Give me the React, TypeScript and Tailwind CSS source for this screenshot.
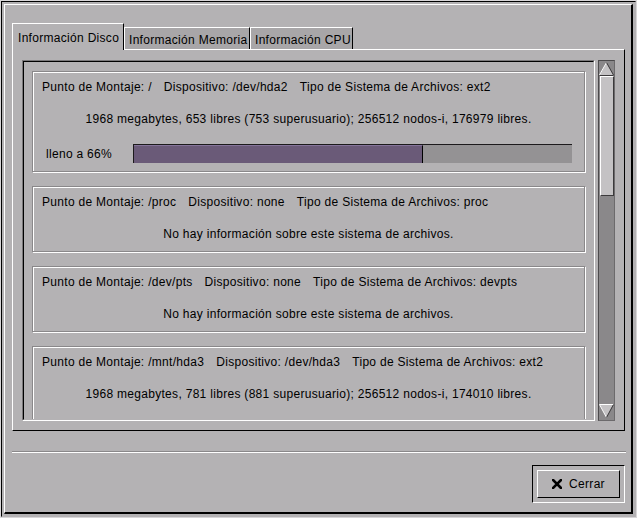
const fs = [
  {
    mount: "/",
    device: "/dev/hda2",
    type: "ext2",
    info: "1968 megabytes, 653 libres (753 superusuario); 256512 nodos-i, 176979 libres.",
    used: 66,
  },
  { mount: "/proc", device: "none", type: "proc", info: null, used: null },
  { mount: "/dev/pts", device: "none", type: "devpts", info: null, used: null },
  {
    // the bar row of this one lies below the scrolled view
    mount: "/mnt/hda3",
    device: "/dev/hda3",
    type: "ext2",
    info: "1968 megabytes, 781 libres (881 superusuario); 256512 nodos-i, 174010 libres.",
    used: null,
  },
];

const UpArrow = () => (
  <svg width="15" height="14" viewBox="0 0 15 14" className="block">
    <polygon points="7.5,1 1,13 14,13" fill="#c4c2c4" />
    <line x1="7.5" y1="0.5" x2="0.5" y2="13" stroke="#ffffff" strokeWidth="1" />
    <line x1="7.5" y1="0.5" x2="14.5" y2="13" stroke="#3c3a3c" strokeWidth="1" />
    <line x1="0.5" y1="13.5" x2="14.5" y2="13.5" stroke="#3c3a3c" strokeWidth="1" />
  </svg>
);

const DownArrow = () => (
  <svg width="15" height="14" viewBox="0 0 15 14" className="block">
    <polygon points="1,1 14,1 7.5,13" fill="#c4c2c4" />
    <line x1="0.5" y1="0.5" x2="14.5" y2="0.5" stroke="#ffffff" strokeWidth="1" />
    <line x1="0.5" y1="0.5" x2="7.5" y2="13.5" stroke="#ffffff" strokeWidth="1" />
    <line x1="14.5" y1="0.5" x2="7.5" y2="13.5" stroke="#3c3a3c" strokeWidth="1" />
  </svg>
);

const CloseIcon = () => (
  <svg width="10" height="10" viewBox="0 0 10 10" className="block">
    <path d="M1 1 L9 9 M9 1 L1 9" stroke="#000" strokeWidth="2.6" strokeLinecap="square" />
  </svg>
);

const App = () => {
  return (
    <div className="w-[637px] h-[518px] bg-[#b4b2b4] border border-[#d8d6d8] font-['Liberation_Sans',Arial,sans-serif] text-[12px] leading-[14px] tracking-[0.3px] text-black">
      <div className="h-full border border-black border-b-[#b4b2b4] border-r-[#b4b2b4] p-[2px]">
        <div className="h-full border-t border-l border-white border-b-2 border-r-2 border-b-black border-r-black pl-[7px] pt-[18px]">
          {/* tabs */}
          <div className="flex items-end h-[26px]">
            <div className="relative z-10 -mb-px h-[27px] w-[112px] bg-[#b4b2b4] border-t border-l border-white border-r border-r-black pt-[7px] pl-[5px] whitespace-nowrap">
              Información Disco
            </div>
            <div className="h-[22px] w-[126px] bg-[#a8a6a8] border-t border-l border-white border-r border-r-black pt-[5px] pl-[4px] whitespace-nowrap">
              Información Memoria
            </div>
            <div className="h-[22px] w-[103px] bg-[#a8a6a8] border-t border-l border-white border-r border-r-black pt-[5px] pl-[4px] whitespace-nowrap">
              Información CPU
            </div>
          </div>

          {/* notebook page */}
          <div className="w-[613px] h-[382px] border border-white border-r-black border-b-black pt-[10px] pl-[9px]">
            <div className="flex gap-[3px]">
              <div className="w-[573px] h-[361px] border border-[#7a787a] border-b-white border-r-white">
                <div className="h-full overflow-hidden border border-black border-b-[#b4b2b4] border-r-[#b4b2b4] pt-[9px] pl-[8px] pr-[8px]">
                  <div className="flex flex-col gap-[14px]">
                    {fs.map((f, i) => (
                      <div
                        key={f.mount}
                        className={`border border-[#8a888a] shadow-[inset_1px_1px_0_#fff,1px_1px_0_#fff] pt-[8px] pb-[10px] shrink-0 ${
                          i === 3 ? "min-h-[101px]" : ""
                        }`}
                      >
                        <div className="flex gap-[12px] pl-[9px] whitespace-nowrap">
                          <span>Punto de Montaje: {f.mount}</span>
                          <span>Dispositivo: {f.device}</span>
                          <span>Tipo de Sistema de Archivos: {f.type}</span>
                        </div>
                        <div className="mt-[18px] text-center whitespace-nowrap">
                          {f.info ?? "No hay información sobre este sistema de archivos."}
                        </div>
                        {f.used !== null && (
                          <div className="mt-[18px] -mb-[2px] flex items-center h-[19px] pl-[13px] pr-[12px]">
                            <span className="w-[87px] shrink-0">lleno a {f.used}%</span>
                            <div className="flex-1 h-[19px] bg-[#949294] border-t border-l border-[#1c1a1c] flex">
                              <div
                                className="h-full bg-[#6a5a78] border-t border-t-[#84749a] border-r border-r-black"
                                style={{ width: `${f.used}%` }}
                              />
                            </div>
                          </div>
                        )}
                      </div>
                    ))}
                  </div>
                </div>
              </div>

              {/* scrollbar */}
              <div className="w-[17px] h-[361px] bg-[#8a888a] border border-[#4c4a4c] border-b-[#6c6a6c] border-r-[#6c6a6c] flex flex-col items-center pt-px pb-[2px]">
                <UpArrow />
                <div className="w-[14px] h-[120px] bg-[#c4c2c4] border-t border-l border-white border-b border-r border-b-[#3c3a3c] border-r-[#3c3a3c]" />
                <div className="flex-1" />
                <DownArrow />
              </div>
            </div>
          </div>

          {/* separator */}
          <div className="w-[614px] mt-[20px] border-t border-[#8a888a] border-b border-b-white" />

          {/* buttons */}
          <div className="w-[614px] mt-[12px] flex justify-end pr-[1px]">
            <div className="w-[93px] h-[38px] border border-black border-b-white border-r-white p-[4px]">
              <div className="h-[28px] w-[83px] bg-[#b4b2b4] border-t border-l border-white border-b border-r border-b-black border-r-black flex items-center justify-center gap-[7px]">
                <CloseIcon />
                <span>Cerrar</span>
              </div>
            </div>
          </div>
        </div>
      </div>
    </div>
  );
};

export default App;
